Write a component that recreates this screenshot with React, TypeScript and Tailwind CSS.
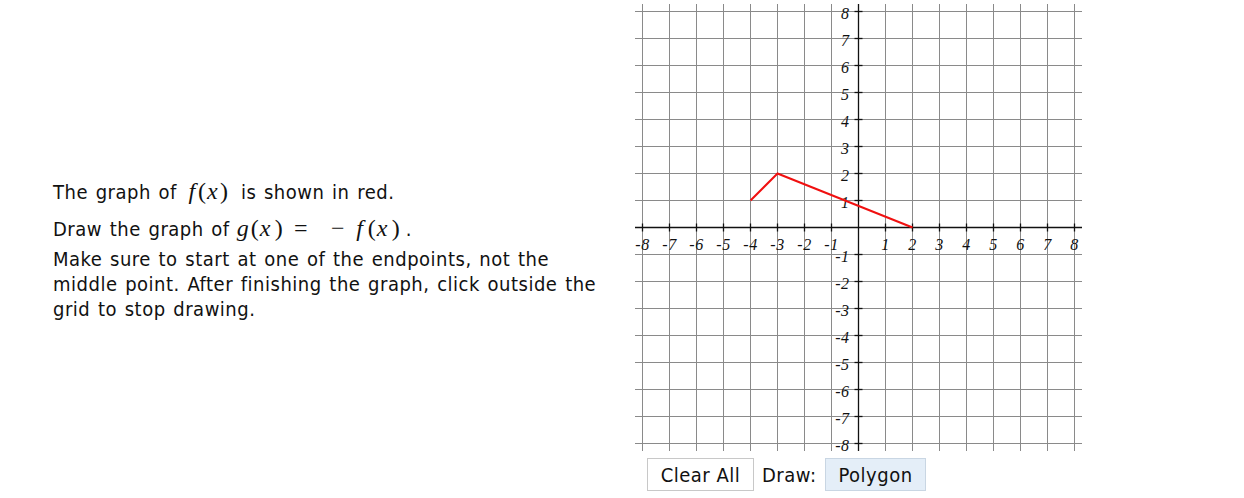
const ORIGIN_X = 224.5;
const ORIGIN_Y = 224.5;
const STEP = 27;
const TICKS = [-8, -7, -6, -5, -4, -3, -2, -1, 0, 1, 2, 3, 4, 5, 6, 7, 8];

const px = (x: number) => ORIGIN_X + x * STEP;
const py = (y: number) => ORIGIN_Y - y * STEP;

function Grid() {
  const red = [
    [-4, 1],
    [-3, 2],
    [2, 0],
  ]
    .map(([x, y]) => `${px(x)},${py(y)}`)
    .join(' ');

  return (
    <svg width="449" height="449" viewBox="0 0 449 449" className="block">
      {TICKS.map((t) => (
        <g key={t} stroke="#8a8a8a" strokeWidth="1">
          <line x1={px(t)} y1="1" x2={px(t)} y2="448" />
          <line x1="1" y1={py(t)} x2="448" y2={py(t)} />
        </g>
      ))}
      <line x1={ORIGIN_X} y1="1" x2={ORIGIN_X} y2="448" stroke="#111" strokeWidth="1.3" />
      <line x1="1" y1={ORIGIN_Y} x2="448" y2={ORIGIN_Y} stroke="#111" strokeWidth="1.3" />
      {TICKS.filter((t) => t !== 0).map((t) => (
        <g key={t} stroke="#111" strokeWidth="1.3">
          <line x1={px(t)} y1={ORIGIN_Y - 4} x2={px(t)} y2={ORIGIN_Y + 4} />
          <line x1={ORIGIN_X - 4} y1={py(t)} x2={ORIGIN_X + 4} y2={py(t)} />
        </g>
      ))}
      <g fontFamily="'Liberation Serif', serif" fontStyle="italic" fontSize="16" fill="#111">
        {TICKS.filter((t) => t !== 0).map((t) => (
          <text key={`x${t}`} x={px(t)} y={ORIGIN_Y + 22} textAnchor="middle">
            {t < 0 ? `-${-t}` : t}
          </text>
        ))}
        {TICKS.filter((t) => t !== 0).map((t) => (
          <text key={`y${t}`} x={ORIGIN_X - 9} y={py(t) + 7} textAnchor="end">
            {t < 0 ? `-${-t}` : t}
          </text>
        ))}
      </g>
      <polyline points={red} fill="none" stroke="#f01010" strokeWidth="2" />
    </svg>
  );
}

// one math glyph in a fixed-width box so the spacing follows the typeset formula
function G({ ch, w, it, ml = 0 }: { ch: string; w: number; it?: boolean; ml?: number }) {
  return (
    <span
      className={`inline-block text-center font-['Liberation_Serif',serif] text-[24px] tracking-normal ${it ? 'italic' : ''}`}
      style={{ width: w, marginLeft: ml }}
    >
      {ch}
    </span>
  );
}

export default function App() {
  return (
    <div className="flex bg-white pt-[3px] font-['DejaVu_Sans_Condensed','DejaVu_Sans',sans-serif] text-[20px] tracking-[0.5px] text-[#111] [font-stretch:condensed] [word-spacing:1.5px]">
      <div className="w-[634px] shrink-0 pl-[53px] pt-[171px]">
        <p className="leading-[34px] whitespace-nowrap">
          The graph of
          <G ch="f" w={12} it ml={9} />
          <G ch="(" w={7} />
          <G ch="x" w={15} it />
          <G ch=")" w={7} />
          <span className="ml-[14px]">is shown in red.</span>
        </p>
        <p className="mt-[2px] leading-[34px] whitespace-nowrap">
          Draw the graph of
          <G ch="g" w={12} it ml={7} />
          <G ch="(" w={7} ml={2} />
          <G ch="x" w={15} it />
          <G ch=")" w={7} ml={2} />
          <G ch="=" w={18} ml={10} />
          <G ch="−" w={14} ml={21} />
          <G ch="f" w={12} it ml={9} />
          <G ch="(" w={7} ml={2} />
          <G ch="x" w={15} it />
          <G ch=")" w={7} ml={2} />
          <span className="ml-[7px]">.</span>
        </p>
        <p className="mt-[1px] w-[556px] leading-[25px]">
          Make sure to start at one of the endpoints, not the middle point. After finishing the graph, click outside the
          grid to stop drawing.
        </p>
      </div>
      <div className="flex flex-col">
        <Grid />
        <div className="ml-[13px] mt-[6px] flex items-center">
          <button className="h-[33px] w-[107px] border border-[#c8c8c8] bg-white text-[20px] text-[#111]">
            Clear All
          </button>
          <span className="ml-[8px] w-[63px]">Draw:</span>
          <button className="h-[33px] w-[101px] border border-[#c9d6e3] bg-[#e4eef8] text-[20px] text-[#111]">
            Polygon
          </button>
        </div>
      </div>
    </div>
  );
}
